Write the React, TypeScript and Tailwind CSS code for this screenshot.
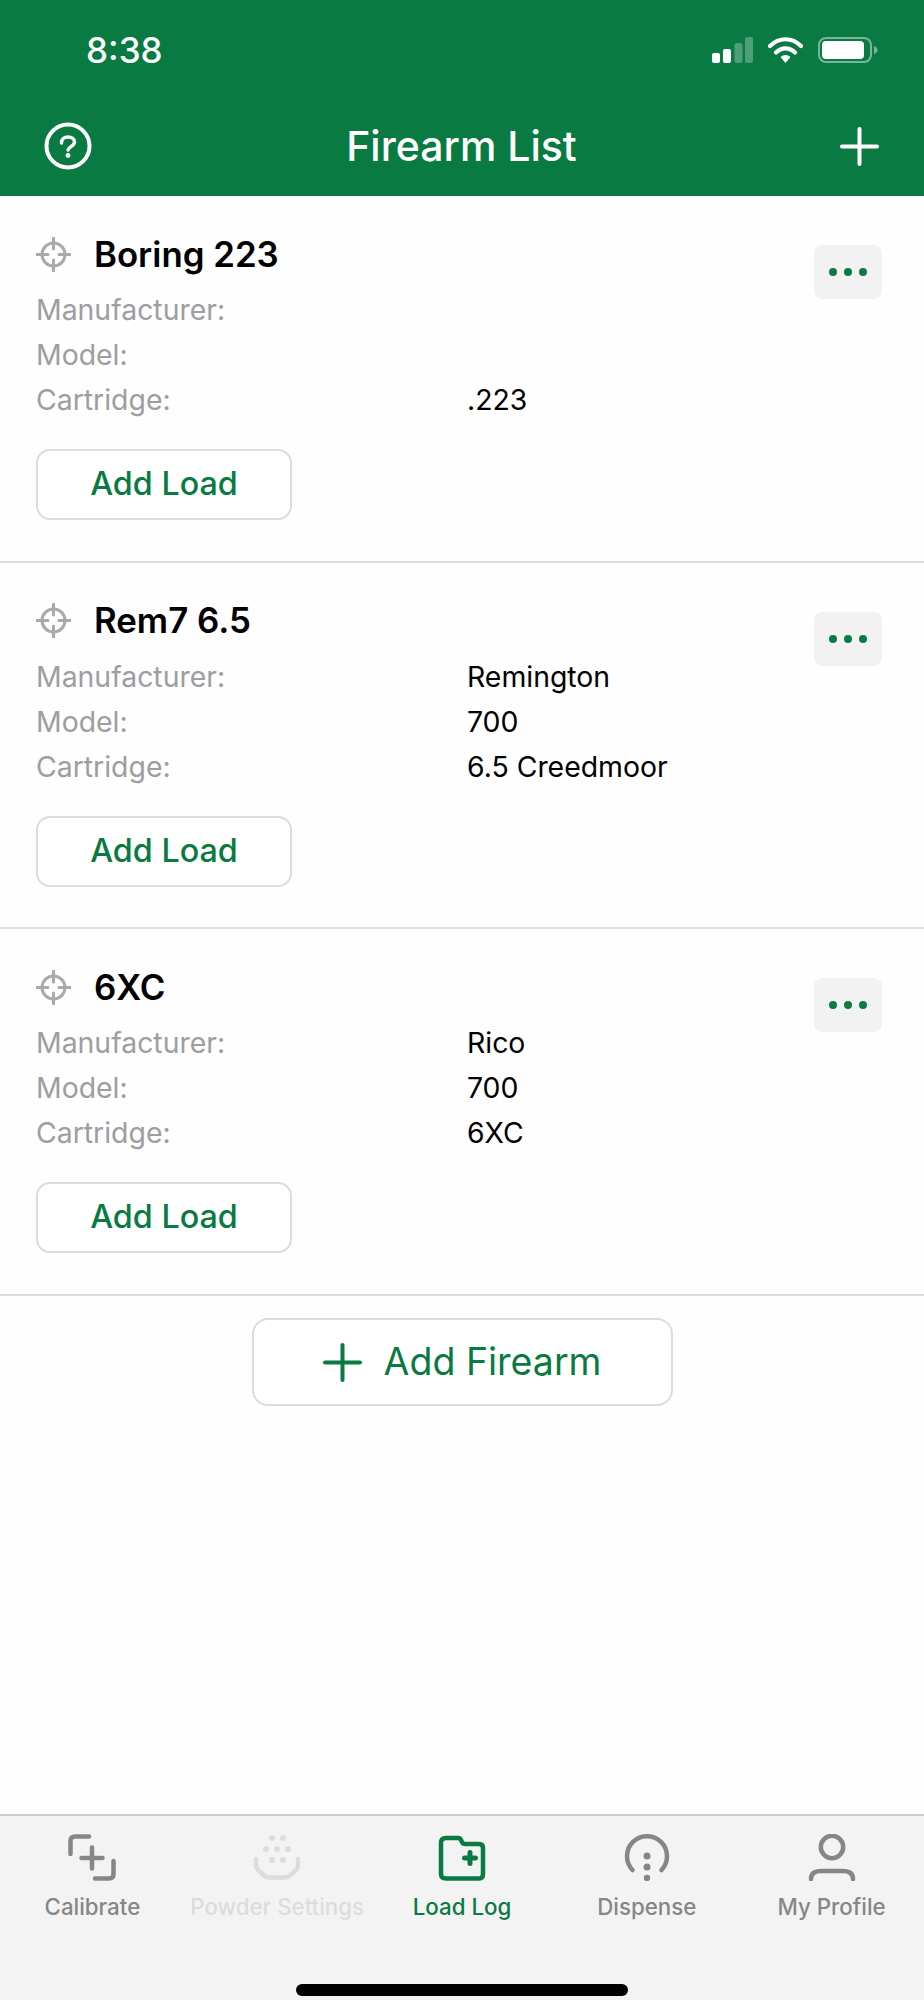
import React from "react";

const green = "#0a7a43";

function StatusIcons() {
  return (
    <div className="flex items-center gap-[15px]">
      <svg width="41" height="26" viewBox="0 0 41 26">
        <rect x="0" y="16" width="8" height="10" rx="2" fill="#fff" />
        <rect x="11" y="12" width="8" height="14" rx="2" fill="#fff" />
        <rect x="22.5" y="6" width="8" height="20" rx="2" fill="#fff" fillOpacity="0.28" />
        <rect x="33" y="0" width="8" height="26" rx="2" fill="#fff" fillOpacity="0.28" />
      </svg>
      <svg width="35" height="26" viewBox="0 0 35 26" fill="none">
        <path d="M2 9 C11 0 24 0 33 9" stroke="#fff" strokeWidth="4.2" strokeLinecap="round" />
        <path d="M8 15.5 C13.5 10 21.5 10 27 15.5" stroke="#fff" strokeWidth="4.2" strokeLinecap="round" />
        <path d="M12.5 20 C15.5 17.3 19.5 17.3 22.5 20 L17.5 26 Z" fill="#fff" />
      </svg>
      <svg width="60" height="26" viewBox="0 0 60 26" fill="none">
        <rect x="1" y="1" width="52" height="24" rx="7" stroke="#fff" strokeOpacity="0.45" strokeWidth="2" />
        <rect x="4" y="4" width="42" height="18" rx="4" fill="#fff" />
        <path d="M56 9 C58.5 10 59.5 11.5 59.5 13 C59.5 14.5 58.5 16 56 17 Z" fill="#fff" fillOpacity="0.45" />
      </svg>
    </div>
  );
}

function HelpIcon() {
  return (
    <svg width="48" height="48" viewBox="0 0 48 48" fill="none">
      <circle cx="24" cy="24" r="21.5" stroke="#fff" strokeWidth="4" />
      <path d="M17.5 21 C17.5 16.5 20.5 15 24 15 C28 15 30.5 17 30.5 20 C30.5 24 25 24.5 24 28" stroke="#fff" strokeWidth="3.4" strokeLinecap="round" />
      <circle cx="24" cy="33.5" r="2.4" fill="#fff" />
    </svg>
  );
}

function PlusIcon({ size, color, width }: { size: number; color: string; width: number }) {
  const c = size / 2;
  const p = width / 2;
  return (
    <svg width={size} height={size} viewBox={`0 0 ${size} ${size}`} fill="none">
      <path d={`M${p} ${c} H${size - p} M${c} ${p} V${size - p}`} stroke={color} strokeWidth={width} strokeLinecap="round" />
    </svg>
  );
}

function TargetIcon() {
  return (
    <svg width="35" height="35" viewBox="0 0 35 35" fill="none" stroke="#a9a9ae" strokeLinecap="round">
      <circle cx="17.5" cy="17.5" r="11.5" strokeWidth="3" />
      <path d="M17.5 1 V12 M17.5 23 V34 M1 17.5 H12 M23 17.5 H34" strokeWidth="3" />
    </svg>
  );
}

function Dots() {
  return (
    <svg width="38" height="10" viewBox="0 0 38 10" fill={green}>
      <circle cx="4" cy="5" r="4" />
      <circle cx="19" cy="5" r="4" />
      <circle cx="34" cy="5" r="4" />
    </svg>
  );
}

const G = "#868686";

function CalibrateIcon() {
  return (
    <svg width="48" height="47" viewBox="0 0 48 47" fill="none" stroke={G} strokeWidth="4.5" strokeLinecap="round">
      <path d="M2.5 20 V7 Q2.5 2.5 7 2.5 H21" />
      <path d="M45.5 27 V40 Q45.5 44.5 41 44.5 H27" />
      <path d="M13.5 24 H34.5 M24 13.5 V34.5" />
    </svg>
  );
}

function PowderIcon() {
  const c = "#dddcdc";
  return (
    <svg width="48" height="47" viewBox="0 0 48 47" fill="none">
      <g fill={c}>
        <circle cx="19" cy="4" r="3" />
        <circle cx="30" cy="4" r="3" />
        <circle cx="13" cy="15" r="3" />
        <circle cx="24" cy="15" r="3" />
        <circle cx="35" cy="15" r="3" />
        <circle cx="19" cy="26" r="3" />
        <circle cx="30" cy="26" r="3" />
      </g>
      <path d="M3 25 V31 Q3 34 5 36 L11 41.5 Q13 43.5 16 43.5 H32 Q35 43.5 37 41.5 L43 36 Q45 34 45 31 V25" stroke={c} strokeWidth="4.5" strokeLinecap="round" />
    </svg>
  );
}

function FolderIcon() {
  return (
    <svg width="48" height="47" viewBox="0 0 48 47" fill="none" stroke={green}>
      <path d="M3 9 Q3 4 8 4 H20 Q22 4 23 6 L24 8 Q25 10 27 10 H41 Q45 10 45 14 V40 Q45 44.5 41 44.5 H8 Q3 44.5 3 40 Z" strokeWidth="4.5" strokeLinejoin="round" />
      <path d="M26.5 24 H37.5 M32 18.5 V29.5" strokeWidth="5" strokeLinecap="round" />
    </svg>
  );
}

function DispenseIcon() {
  return (
    <svg width="48" height="47" viewBox="0 0 48 47" fill="none">
      <path d="M9.5 36 A20 20 0 1 1 38.5 36" stroke={G} strokeWidth="4.5" strokeLinecap="round" />
      <circle cx="24" cy="22" r="3.5" fill={G} />
      <circle cx="24" cy="33" r="3.5" fill={G} />
      <circle cx="24" cy="44" r="3.2" fill={G} />
    </svg>
  );
}

function ProfileIcon() {
  return (
    <svg width="48" height="47" viewBox="0 0 48 47" fill="none" stroke={G} strokeWidth="4.5" strokeLinecap="round">
      <circle cx="24" cy="13" r="11.2" />
      <path d="M3 45 Q3 37 13 37 H35 Q45 37 45 45" />
    </svg>
  );
}

function Row({ label, value }: { label: string; value: string }) {
  return (
    <div className="grid h-[45px] grid-cols-[431px_1fr] items-center text-[28.4px]">
      <span className="text-[#9d9da2]">{label}</span>
      <span className="text-black">{value}</span>
    </div>
  );
}

function Card({ name, mfr, model, cart }: { name: string; mfr: string; model: string; cart: string }) {
  return (
    <div className="flex h-[366.5px] border-b-2 border-[#dcdbde] pl-[36px] pr-[42px] pt-[36px]">
      <div className="flex-1">
        <div className="flex h-[44px] items-center gap-[23px]">
          <TargetIcon />
          <span className="text-[34.8px] font-semibold text-black">{name}</span>
        </div>
        <div className="mt-[12px]">
          <Row label="Manufacturer:" value={mfr} />
          <Row label="Model:" value={model} />
          <Row label="Cartridge:" value={cart} />
        </div>
        <button className="mt-[26px] flex h-[71px] w-[256px] items-center justify-center rounded-[14px] border-2 border-[#dcdbde] bg-white text-[32.3px] font-medium text-[#0a7a43]">
          Add Load
        </button>
      </div>
      <button className="mt-[13px] flex h-[54px] w-[68px] items-center justify-center rounded-[8px] bg-[#f3f2f3]">
        <Dots />
      </button>
    </div>
  );
}

function Tab({ icon, label, cls }: { icon: React.ReactNode; label: string; cls: string }) {
  return (
    <div className="flex flex-col items-center">
      {icon}
      <span className={`mt-[11px] whitespace-nowrap text-[22.3px] leading-[30px] font-medium ${cls}`}>{label}</span>
    </div>
  );
}

export default function App() {
  return (
    <div className="flex h-[2000px] w-[924px] flex-col overflow-hidden bg-[#fefefe] [font-family:Inter,sans-serif]">
      <header className="flex h-[196px] flex-col bg-[#0a7a43] text-white">
        <div className="flex h-[100px] items-center justify-between pl-[86px] pr-[46px]">
          <span className="text-[35px] font-medium">8:38</span>
          <StatusIcons />
        </div>
        <div className="flex flex-1 items-start justify-between pl-[44px] pr-[45px] pt-[22px]">
          <HelpIcon />
          <span className="text-[41px] leading-[48px] font-medium">Firearm List</span>
          <div className="flex w-[48px] justify-end pt-[5px]">
            <PlusIcon size={39} color="#fff" width={4} />
          </div>
        </div>
      </header>

      <Card name="Boring 223" mfr="" model="" cart=".223" />
      <Card name="Rem7 6.5" mfr="Remington" model="700" cart="6.5 Creedmoor" />
      <Card name="6XC" mfr="Rico" model="700" cart="6XC" />

      <button className="mx-auto mt-[22.5px] flex h-[88px] w-[421px] items-center justify-center gap-[22px] rounded-[16px] border-2 border-[#dcdbde] bg-white text-[37.5px] text-[#0a7a43]">
        <PlusIcon size={39} color={green} width={4} />
        Add Firearm
      </button>

      <div className="flex-1" />

      <nav className="h-[186px] border-t-2 border-[#cbcace] bg-[#f4f3f3] pt-[18px]">
        <div className="grid grid-cols-5">
          <Tab icon={<CalibrateIcon />} label="Calibrate" cls="text-[#868686]" />
          <Tab icon={<PowderIcon />} label="Powder Settings" cls="text-[#dddcdc]" />
          <Tab icon={<FolderIcon />} label="Load Log" cls="text-[#0a7a43]" />
          <Tab icon={<DispenseIcon />} label="Dispense" cls="text-[#868686]" />
          <Tab icon={<ProfileIcon />} label="My Profile" cls="text-[#868686]" />
        </div>
        <div className="mx-auto mt-[62px] h-[12px] w-[332px] rounded-full bg-black" />
      </nav>
    </div>
  );
}
